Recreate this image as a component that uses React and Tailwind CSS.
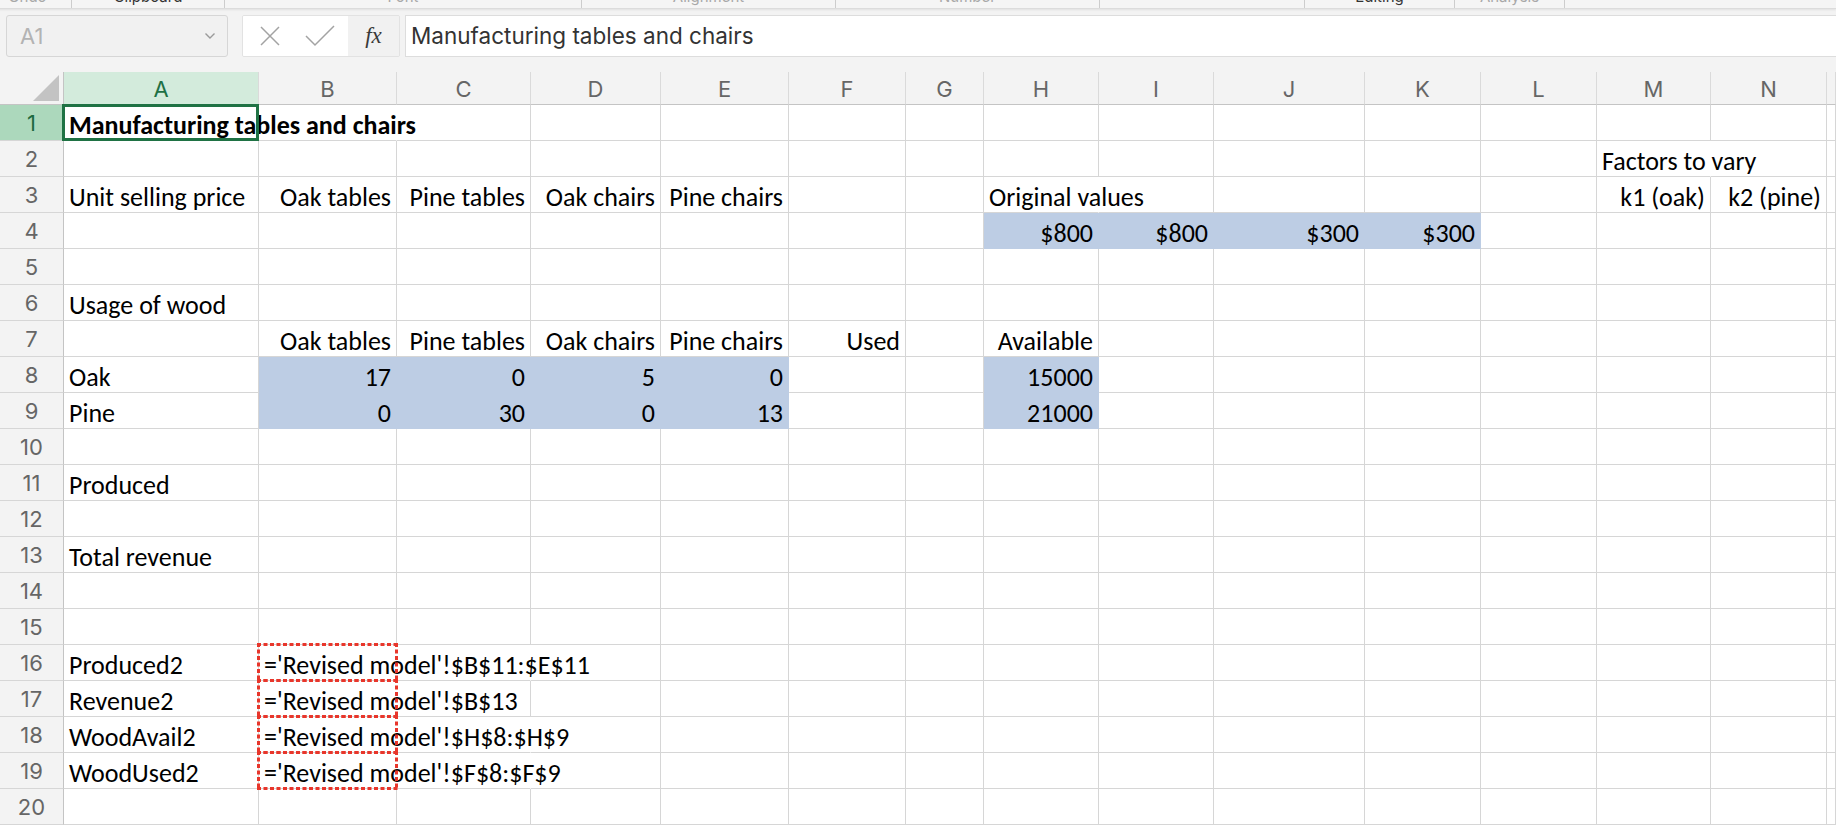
import React from "react";

const COLS = ["A","B","C","D","E","F","G","H","I","J","K","L","M","N","O"];
const ROWS = Array.from({ length: 20 }, (_, i) => i + 1);

const DATA = {
  A1: { t: "Manufacturing tables and chairs", bold: true },
  M2: { t: "Factors to vary" },
  A3: { t: "Unit selling price" },
  B3: { t: "Oak tables", r: true },
  C3: { t: "Pine tables", r: true },
  D3: { t: "Oak chairs", r: true },
  E3: { t: "Pine chairs", r: true },
  H3: { t: "Original values" },
  M3: { t: "k1 (oak)", r: true },
  N3: { t: "k2 (pine)", r: true },
  H4: { t: "$800", r: true, fill: true },
  I4: { t: "$800", r: true, fill: true },
  J4: { t: "$300", r: true, fill: true },
  K4: { t: "$300", r: true, fill: true },
  A6: { t: "Usage of wood" },
  B7: { t: "Oak tables", r: true },
  C7: { t: "Pine tables", r: true },
  D7: { t: "Oak chairs", r: true },
  E7: { t: "Pine chairs", r: true },
  F7: { t: "Used", r: true },
  H7: { t: "Available", r: true },
  A8: { t: "Oak" },
  B8: { t: "17", r: true, fill: true },
  C8: { t: "0", r: true, fill: true },
  D8: { t: "5", r: true, fill: true },
  E8: { t: "0", r: true, fill: true },
  H8: { t: "15000", r: true, fill: true },
  A9: { t: "Pine" },
  B9: { t: "0", r: true, fill: true },
  C9: { t: "30", r: true, fill: true },
  D9: { t: "0", r: true, fill: true },
  E9: { t: "13", r: true, fill: true },
  H9: { t: "21000", r: true, fill: true },
  A11: { t: "Produced" },
  A13: { t: "Total revenue" },
  A16: { t: "Produced2" },
  B16: { t: "='Revised model'!$B$11:$E$11", dash: true },
  A17: { t: "Revenue2" },
  B17: { t: "='Revised model'!$B$13", dash: true },
  A18: { t: "WoodAvail2" },
  B18: { t: "='Revised model'!$H$8:$H$9", dash: true },
  A19: { t: "WoodUsed2" },
  B19: { t: "='Revised model'!$F$8:$F$9", dash: true },
};

const HIDE_R = new Set(["A1","B1","M2","H3","B16","C16","B17","B18","C18","B19","C19"]);

const CELL_FONT = { fontFamily: "Carlito, Lato, sans-serif" };

function DashBox() {
  const s = { stroke: "#e8362b", strokeWidth: 3, strokeDasharray: "4 2.5", fill: "none" };
  return (
    <svg className="absolute -left-[2px] -top-[2px] z-20 pointer-events-none" width="141" height="39">
      <line x1="0" y1="1.5" x2="141" y2="1.5" {...s} />
      <line x1="0" y1="37.5" x2="141" y2="37.5" {...s} />
      <line x1="1.5" y1="0" x2="1.5" y2="39" {...s} />
      <line x1="139.5" y1="0" x2="139.5" y2="39" {...s} />
    </svg>
  );
}

function Cell({ r, c }) {
  const key = c + r;
  const d = DATA[key];
  const fill = d && d.fill;
  const hideR = HIDE_R.has(key);
  let cls = "relative flex items-center whitespace-nowrap border-b border-r pt-[4px] text-[26px] leading-none text-black";
  cls += fill ? " bg-[#bdcde4] border-b-[#bdcde4]" : " border-b-[#d6d6d6]";
  cls += fill ? " border-r-[#bdcde4]" : hideR ? " border-r-white" : " border-r-[#d6d6d6]";
  cls += d && d.r ? " justify-end pr-[5px]" : " justify-start pl-[5px]";
  return (
    <div className={cls} style={CELL_FONT}>
      {d && (
        <span className={"relative z-10 " + (d.bold ? "font-bold" : "font-normal")}>{d.t}</span>
      )}
      {d && d.dash && <DashBox />}
      {key === "A1" && (
        <div className="absolute -left-[2px] -right-[1px] -top-[1px] -bottom-[1px] border-[3px] border-[#1f7244] z-20 pointer-events-none" />
      )}
    </div>
  );
}

function RibbonGroup({ w, label, dark, last }) {
  return (
    <div className={"shrink-0 h-[8px] overflow-hidden text-center " + (last ? "" : "border-r border-[#cdcdcd]")} style={{ width: w }}>
      <div className={"-mt-[12px] text-[15px] leading-[18px] " + (dark ? "text-[#333]" : "text-[#a8a8a8]")} style={{ fontFamily: "Inter, sans-serif" }}>
        {label}
      </div>
    </div>
  );
}

export default function App() {
  return (
    <div className="w-[1836px] h-[828px] overflow-hidden bg-[#f3f3f3] flex flex-col" style={{ fontFamily: "Inter, sans-serif" }}>
      {/* ribbon bottom strip */}
      <div className="h-[9px] shrink-0 flex bg-[#f5f5f5] border-b border-[#dcdcdc] shadow-[0_1px_2px_rgba(0,0,0,0.08)] -ml-[16px]">
        <RibbonGroup w={88} label="Undo" />
        <RibbonGroup w={153} label="Clipboard" dark />
        <RibbonGroup w={357} label="Font" />
        <RibbonGroup w={254} label="Alignment" />
        <RibbonGroup w={264} label="Number" />
        <RibbonGroup w={205} label="" />
        <RibbonGroup w={150} label="Editing" dark />
        <RibbonGroup w={110} label="Analysis" />
        <div className="flex-1" />
      </div>

      {/* formula bar */}
      <div className="h-[63px] shrink-0 flex items-start pt-[6px]">
        <div className="ml-[6px] w-[222px] h-[42px] border border-[#d6d6d6] rounded-[3px] bg-[#f1f1f1] flex items-center justify-between pl-[13px] pr-[11px]">
          <span className="text-[22px] text-[#b3b3b3]">A1</span>
          <svg width="12" height="8" viewBox="0 0 12 8">
            <path d="M1.5 1.5 L6 6 L10.5 1.5" fill="none" stroke="#9a9a9a" strokeWidth="1.4" />
          </svg>
        </div>
        <div className="ml-[14px] w-[158px] h-[42px] flex border border-[#e2e2e2] rounded-[2px] overflow-hidden">
          <div className="w-[105px] bg-white flex items-center">
            <svg className="ml-[15px]" width="24" height="24" viewBox="0 0 24 24">
              <path d="M3 3 L21 21 M21 3 L3 21" stroke="#a3a3a3" strokeWidth="1.5" fill="none" />
            </svg>
            <svg className="ml-[22px]" width="32" height="24" viewBox="0 0 32 24">
              <path d="M2 12 L11 21 L30 2" stroke="#a3a3a3" strokeWidth="1.5" fill="none" />
            </svg>
          </div>
          <div className="flex-1 bg-[#f1f1f1] flex items-center justify-center">
            <span className="italic text-[23px] text-[#3a3a3a]" style={{ fontFamily: "'Liberation Serif', serif" }}>fx</span>
          </div>
        </div>
        <div className="ml-[5px] flex-1 h-[42px] bg-white border-y border-l border-[#dddddd] flex items-center pl-[5px]">
          <span className="text-[22.5px] text-[#333]">Manufacturing tables and chairs</span>
        </div>
      </div>

      {/* sheet */}
      <div className="bg-white flex-1 grid grid-cols-[64px_195px_138px_134px_130px_128px_117px_78px_115px_115px_151px_116px_116px_114px_116px_1fr] grid-rows-[33px_repeat(20,36px)]">
        {/* corner */}
        <div className="bg-[#f3f3f3] border-r border-b border-[#c4c4c4] flex items-end justify-end pr-[4px] pb-[3px]">
          <svg width="26" height="26" viewBox="0 0 26 26">
            <path d="M26 0 L26 26 L0 26 Z" fill="#c3c3c3" />
          </svg>
        </div>
        {COLS.map((c) => (
          <div
            key={c}
            className={
              "flex items-center justify-center border-b border-b-[#c4c4c4] border-r border-r-[#dadada] text-[22px] pt-[2px] " +
              (c === "A" ? "bg-[#d3ebdc] text-[#1e7145]" : "bg-[#f3f3f3] text-[#666666]")
            }
          >
            {c === "O" ? "" : c}
          </div>
        ))}
        {ROWS.map((r) => (
          <React.Fragment key={r}>
            <div
              className={
                "flex items-center justify-center border-r border-r-[#c4c4c4] border-b border-b-[#d6d6d6] text-[22px] pt-[2px] " +
                (r === 1 ? "bg-[#acd8bc] text-[#1e6b40]" : "bg-[#f3f3f3] text-[#666666]")
              }
            >
              {r}
            </div>
            {COLS.map((c) => (
              <Cell key={c + r} r={r} c={c} />
            ))}
          </React.Fragment>
        ))}
      </div>
    </div>
  );
}
